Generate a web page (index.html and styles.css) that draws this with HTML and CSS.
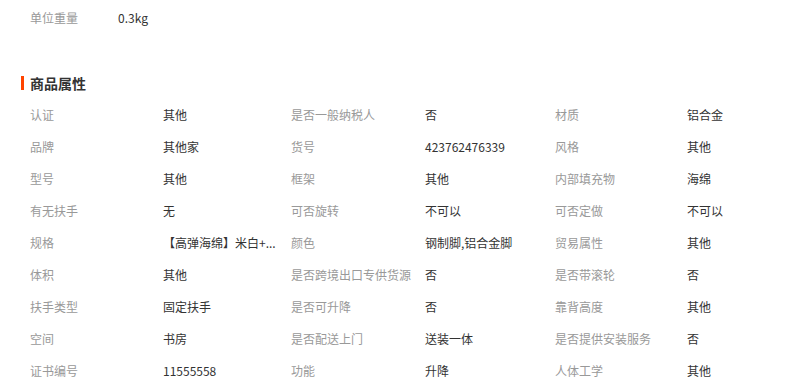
FILE: index.html
```html
<!DOCTYPE html>
<html lang="zh-CN">
<head>
<meta charset="utf-8">
<title>商品属性</title>
<link rel="stylesheet" href="styles.css">
</head>
<body>
<div class="page">
  <div class="weight-row">
    <span class="label weight-label">单位重量</span>
    <span class="value">0.3kg</span>
  </div>
  <h2 class="section-title"><span class="bar"></span>商品属性</h2>
  <div class="attrs">
    <span class="label">认证</span><span class="value">其他</span>
    <span class="label">是否一般纳税人</span><span class="value">否</span>
    <span class="label">材质</span><span class="value">铝合金</span>

    <span class="label">品牌</span><span class="value">其他家</span>
    <span class="label">货号</span><span class="value">423762476339</span>
    <span class="label">风格</span><span class="value">其他</span>

    <span class="label">型号</span><span class="value">其他</span>
    <span class="label">框架</span><span class="value">其他</span>
    <span class="label">内部填充物</span><span class="value">海绵</span>

    <span class="label">有无扶手</span><span class="value">无</span>
    <span class="label">可否旋转</span><span class="value">不可以</span>
    <span class="label">可否定做</span><span class="value">不可以</span>

    <span class="label">规格</span><span class="value">【高弹海绵】米白+...</span>
    <span class="label">颜色</span><span class="value">钢制脚,铝合金脚</span>
    <span class="label">贸易属性</span><span class="value">其他</span>

    <span class="label">体积</span><span class="value">其他</span>
    <span class="label">是否跨境出口专供货源</span><span class="value">否</span>
    <span class="label">是否带滚轮</span><span class="value">否</span>

    <span class="label">扶手类型</span><span class="value">固定扶手</span>
    <span class="label">是否可升降</span><span class="value">否</span>
    <span class="label">靠背高度</span><span class="value">其他</span>

    <span class="label">空间</span><span class="value">书房</span>
    <span class="label">是否配送上门</span><span class="value">送装一体</span>
    <span class="label">是否提供安装服务</span><span class="value">否</span>

    <span class="label">证书编号</span><span class="value">11555558</span>
    <span class="label">功能</span><span class="value">升降</span>
    <span class="label">人体工学</span><span class="value">其他</span>
  </div>
</div>
</body>
</html>
```

FILE: styles.css
```css
html, body {
  margin: 0;
  padding: 0;
  background: #fff;
}

body {
  font-family: "Noto Sans CJK SC", "Microsoft YaHei", sans-serif;
  font-size: 12px;
  color: #333;
}

.page {
  padding: 2px 0 0 30px;
}

.weight-row {
  display: flex;
  height: 32px;
  line-height: 32px;
}

.weight-label {
  width: 88px;
}

.label {
  color: #999;
  white-space: nowrap;
}

.value {
  color: #333;
  white-space: nowrap;
}

.section-title {
  display: flex;
  align-items: center;
  margin: 39px 0 0 -9px;
  height: 20px;
  font-size: 14px;
  font-weight: bold;
  color: #333;
}

.bar {
  width: 3px;
  height: 14px;
  background: #ff4400;
  margin-right: 6px;
}

.attrs {
  display: grid;
  grid-template-columns: 133px 128px 134px 130px 132px 100px;
  grid-auto-rows: 32px;
  line-height: 32px;
  margin-top: 6px;
}
```
